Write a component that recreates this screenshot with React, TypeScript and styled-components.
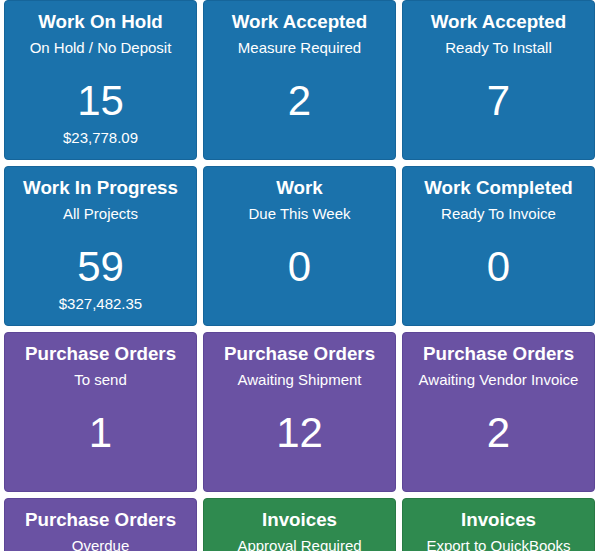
import React from "react";
import styled, { createGlobalStyle } from "styled-components";

const GlobalStyle = createGlobalStyle`
  html, body {
    margin: 0;
    padding: 0;
    background: #ffffff;
    overflow: hidden;
    font-family: "Liberation Sans", Arial, sans-serif;
  }
`;

type Tone = "blue" | "purple" | "green";

const tones: Record<Tone, { bg: string; border: string }> = {
  blue: { bg: "#1b72ab", border: "#16659a" },
  purple: { bg: "#6a52a3", border: "#5d4696" },
  green: { bg: "#2f8a4f", border: "#287a44" },
};

const Board = styled.div`
  display: grid;
  grid-template-columns: repeat(3, 193px);
  grid-auto-rows: 160px;
  column-gap: 6px;
  row-gap: 6px;
  padding: 0 0 0 4px;
`;

const Tile = styled.a<{ $tone: Tone }>`
  display: flex;
  flex-direction: column;
  align-items: center;
  box-sizing: border-box;
  padding-top: 10px;
  background: ${(p) => tones[p.$tone].bg};
  border: 1px solid ${(p) => tones[p.$tone].border};
  border-radius: 4px;
  color: #ffffff;
  text-decoration: none;
  text-align: center;
  overflow: hidden;
`;

const Title = styled.div`
  font-size: 18.75px;
  font-weight: bold;
  line-height: 21.5px;
  white-space: nowrap;
`;

const Subtitle = styled.div`
  margin-top: 6px;
  font-size: 15px;
  line-height: 17px;
  white-space: nowrap;
`;

const Count = styled.div`
  margin-top: 21px;
  font-size: 42px;
  line-height: 48px;
`;

const Amount = styled.div`
  margin-top: 4px;
  font-size: 15px;
  line-height: 17px;
`;

type Item = {
  title: string;
  sub: string;
  count?: string;
  amount?: string;
  tone: Tone;
};

const items: Item[] = [
  { title: "Work On Hold", sub: "On Hold / No Deposit", count: "15", amount: "$23,778.09", tone: "blue" },
  { title: "Work Accepted", sub: "Measure Required", count: "2", tone: "blue" },
  { title: "Work Accepted", sub: "Ready To Install", count: "7", tone: "blue" },
  { title: "Work In Progress", sub: "All Projects", count: "59", amount: "$327,482.35", tone: "blue" },
  { title: "Work", sub: "Due This Week", count: "0", tone: "blue" },
  { title: "Work Completed", sub: "Ready To Invoice", count: "0", tone: "blue" },
  { title: "Purchase Orders", sub: "To send", count: "1", tone: "purple" },
  { title: "Purchase Orders", sub: "Awaiting Shipment", count: "12", tone: "purple" },
  { title: "Purchase Orders", sub: "Awaiting Vendor Invoice", count: "2", tone: "purple" },
  { title: "Purchase Orders", sub: "Overdue", count: "0", tone: "purple" },
  { title: "Invoices", sub: "Approval Required", count: "0", tone: "green" },
  { title: "Invoices", sub: "Export to QuickBooks", count: "0", tone: "green" },
];

export default function App() {
  return (
    <>
      <GlobalStyle />
      <Board>
        {items.map((it, i) => (
          <Tile key={i} $tone={it.tone}>
            <Title>{it.title}</Title>
            <Subtitle>{it.sub}</Subtitle>
            {it.count !== undefined && <Count>{it.count}</Count>}
            {it.amount && <Amount>{it.amount}</Amount>}
          </Tile>
        ))}
      </Board>
    </>
  );
}
